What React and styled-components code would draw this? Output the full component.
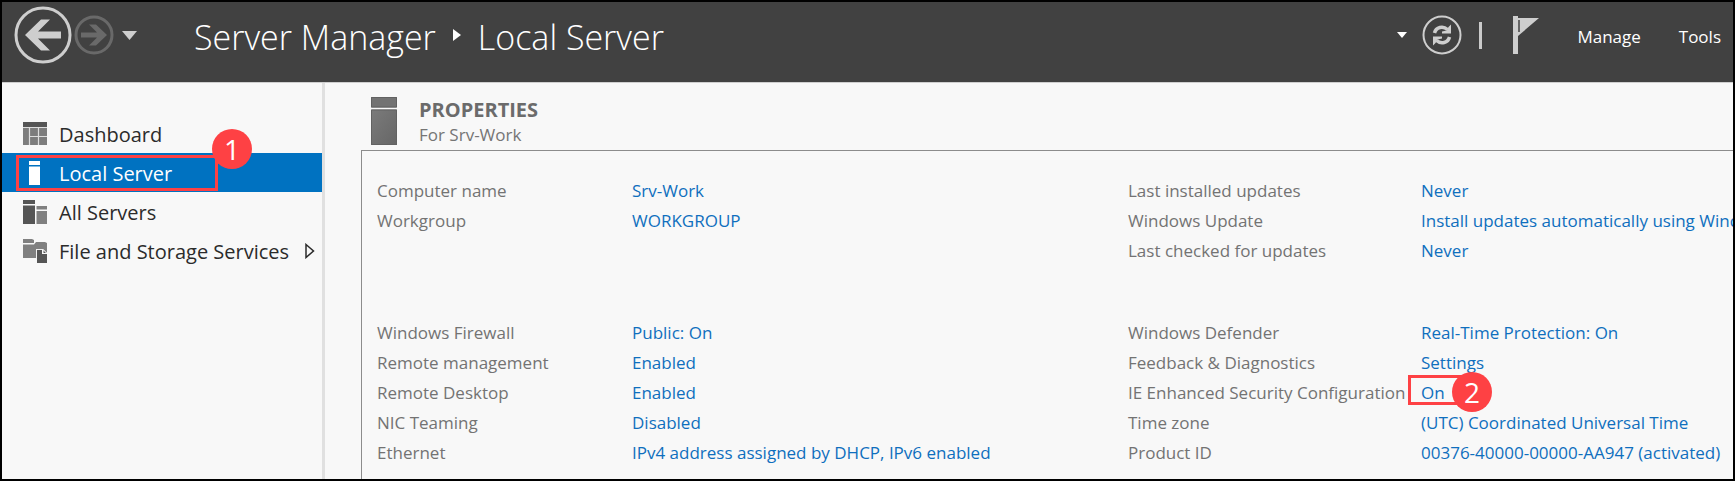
import React from "react";
import styled, { createGlobalStyle, css } from "styled-components";

const GlobalStyle = createGlobalStyle`
  *, *::before, *::after { box-sizing: border-box; }
  body {
    margin: 0;
    background: #f8f8f8;
    font-family: "Open Sans", "Noto Sans", sans-serif;
  }
  svg { display: block; flex: none; }
`;

const Window = styled.div`
  display: flex;
  flex-direction: column;
  min-height: 100vh;
  border: 2px solid #000;
  background: #f8f8f8;
  overflow: hidden;
`;

const Header = styled.header`
  display: flex;
  align-items: center;
  justify-content: space-between;
  height: 81px;
  padding: 0 12px 14px;
  background: #414141;
  border-bottom: 1px solid #cfcfcf;
  color: #fff;
`;

const HeaderGroup = styled.div`
  display: flex;
  align-items: center;
`;

const IconButton = styled.button`
  display: block;
  padding: 0;
  margin: 0 0 0 ${(p) => p.$gap || 0}px;
  border: 0;
  background: none;
  cursor: pointer;
`;

const Breadcrumb = styled.nav`
  display: flex;
  align-items: center;
  gap: 17px;
  margin-left: 57px;
  font-size: 34px;
  font-weight: 300;
  line-height: 48px;
  white-space: nowrap;
`;

const Crumb = styled.a`
  padding-top: 4px;
  color: #fff;
  text-decoration: none;
`;

const Divider = styled.span`
  width: 3px;
  height: 27px;
  margin: 0 31px 0 17px;
  background: #cacaca;
`;

const MenuButton = styled.button`
  margin: 0 0 0 38px;
  padding: 3px 0 0;
  border: 0;
  background: none;
  color: #fff;
  font: inherit;
  font-size: 17px;
  line-height: 24px;
  cursor: pointer;
`;

const Body = styled.div`
  display: flex;
  flex: 1;
`;

const Sidebar = styled.nav`
  flex: 0 0 323px;
  padding-top: 31px;
  border-right: 3px solid #e0e0e0;
`;

const NavList = styled.ul`
  margin: 0;
  padding: 0;
  list-style: none;
`;

const NavItem = styled.li`
  position: relative;
`;

const NavLink = styled.a`
  display: flex;
  align-items: center;
  gap: 12px;
  height: 39px;
  padding: 0 7px 0 21px;
  font-size: 20px;
  line-height: 28px;
  white-space: nowrap;
  text-decoration: none;
  color: #2b2b2b;
  ${(p) =>
    p.$active &&
    css`
      background: #0072c1;
      color: #fff;
    `}
`;

const NavLabel = styled.span`
  flex: 1;
  padding-top: 2px;
`;

const Main = styled.main`
  display: flex;
  flex-direction: column;
  flex: 1;
  min-width: 0;
  padding: 14px 0 0 36px;
`;

const TileHeader = styled.div`
  display: flex;
  gap: 22px;
  padding-left: 10px;
  height: 53px;
`;

const TileTitle = styled.h1`
  margin: 0;
  font-size: 20px;
  font-weight: 700;
  line-height: 25px;
  color: #6b6b6b;
`;

const TileSubtitle = styled.p`
  margin: 0;
  font-size: 17px;
  line-height: 25px;
  color: #757575;
`;

const Panel = styled.section`
  display: grid;
  grid-template-columns: minmax(0, 1fr) 605px;
  flex: 1;
  padding: 25px 0 10px 15px;
  border: solid #8c8c8c;
  border-width: 1px 0 0 1px;
`;

const Column = styled.div`
  display: grid;
  grid-template-rows: 90px auto;
  align-content: start;
  gap: 52px;
  min-width: 0;
`;

const Properties = styled.dl`
  display: grid;
  grid-template-columns: ${(p) => p.$label}px minmax(0, 1fr);
  grid-auto-rows: 30px;
  align-content: start;
  margin: 0;
  font-size: 17px;
  line-height: 30px;
  white-space: nowrap;
`;

const Term = styled.dt`
  color: #737373;
`;

const Value = styled.dd`
  position: relative;
  margin: 0;
`;

const ValueLink = styled.a`
  color: #0f6fbe;
  text-decoration: none;
`;

const Highlight = styled.span`
  position: absolute;
  border: 3px solid #fe4144;
  pointer-events: none;
`;

const NavHighlight = styled(Highlight)`
  inset: 2px 104px 1px 14px;
`;

const ValueHighlight = styled(Highlight)`
  left: -13px;
  top: -3px;
  width: 64px;
  height: 30px;
`;

const Badge = styled.span`
  position: absolute;
  right: -37px;
  top: ${(p) => p.$top}px;
  width: 40px;
  height: 40px;
  border-radius: 50%;
  background: #fe4144;
  color: #fff;
  font-size: 28px;
  line-height: 40px;
  text-align: center;
`;

const ValueBadge = styled(Badge)`
  right: -23px;
`;

const BackIcon = () => (
  <svg width="58" height="58" viewBox="0 0 58 58">
    <circle cx="29" cy="29" r="27" fill="none" stroke="#cecece" strokeWidth="3" />
    <path d="M11 29 27 13.500H36L24 25.500H47V32.500H24L36 44.500H27Z" fill="#cecece" />
  </svg>
);

const ForwardIcon = () => (
  <svg width="40" height="40" viewBox="0 0 40 40">
    <circle cx="20" cy="20" r="18" fill="none" stroke="#696969" strokeWidth="3" />
    <path d="M33 20 22 9.500H15L23 17.500H7V22.500H23L15 30.500H22Z" fill="#696969" />
  </svg>
);

const CaretDown = ({ width, height, fill }) => (
  <svg width={width} height={height} viewBox="0 0 16 10" preserveAspectRatio="none">
    <path d="M0 0H16L8 10Z" fill={fill} />
  </svg>
);

const CrumbArrow = () => (
  <svg width="8" height="12" viewBox="0 0 8 12">
    <path d="M0 0 8 6 0 12Z" fill="#fff" />
  </svg>
);

const RefreshIcon = () => (
  <svg width="40" height="40" viewBox="0 0 40 40">
    <circle cx="20" cy="20" r="18.500" fill="none" stroke="#cecece" strokeWidth="2" />
    <g fill="none" stroke="#cecece" strokeWidth="3.500">
      <path d="M12.500 18C14 12 21 10.500 25.500 14.500" />
      <path d="M27.500 22C26 28 19 29.500 14.500 25.500" />
    </g>
    <path d="M29 9.500V18.500H20V16.500L24.500 15.500L26.500 12Z" fill="#cecece" />
    <path d="M11 30.500V21.500H20V23.500L15.500 24.500L13.500 28Z" fill="#cecece" />
  </svg>
);

const FlagIcon = () => (
  <svg width="26" height="38" viewBox="0 0 26 38">
    <path d="M0 0H5V2H26L5 20V38H0Z" fill="#cecece" />
    <path d="M6 4V16" stroke="#414141" strokeWidth="1.500" />
  </svg>
);

const PropertiesIcon = () => (
  <svg width="26" height="48" viewBox="0 0 26 48">
    <defs>
      <linearGradient id="server" x1="0" y1="0" x2="1" y2="1">
        <stop offset="0" stopColor="#7b7b7b" />
        <stop offset="1" stopColor="#666" />
      </linearGradient>
    </defs>
    <path d="M0 0H26V10.500H0Z" fill="#737373" />
    <path d="M0 12.500H26V48H0Z" fill="url(#server)" />
    <path d="M0.500 0.500H25.500V10H0.500ZM0.500 13H25.500V47.500H0.500Z" fill="none" stroke="#626262" />
  </svg>
);

const DashboardIcon = () => (
  <svg width="24" height="24" viewBox="0 0 24 24">
    <path d="M0 0H24V5H0Z" fill="#555" />
    <path d="M0 5H24V23H0Z" fill="#7d7d7d" />
    <path d="M0 5.500H24M6.500 5V23M15.500 5V23M7 14.500H24" stroke="#dedede" strokeWidth="1.200" />
  </svg>
);

const LocalServerIcon = () => (
  <svg width="24" height="24" viewBox="0 0 24 24">
    <path d="M6 0H17V4H6ZM6 5.500H17V24H6Z" fill="#fff" />
  </svg>
);

const AllServersIcon = () => (
  <svg width="24" height="24" viewBox="0 0 24 24">
    <path d="M0 0H12V4H0ZM0 5.500H12V24H0Z" fill="#555" />
    <path d="M13.500 6H24V9.500H13.500ZM13.500 11H24V24H13.500Z" fill="#808080" />
  </svg>
);

const StorageIcon = () => (
  <svg width="24" height="24" viewBox="0 0 24 24">
    <path d="M0 0H9L11 1V4H0ZM0 5.500H11L13 3H22L24 4V14L20 10H13V19H0Z" fill="#808080" />
    <path d="M14 11H19V15H24V24H14Z" fill="#555" />
    <path d="M20.500 11 23.500 14H20.500Z" fill="#555" />
    <path d="M13.500 20V10.500H20L24 14.500" fill="none" stroke="#f0f0f0" strokeWidth="1" />
  </svg>
);

const ExpandIcon = () => (
  <svg width="10" height="16" viewBox="0 0 10 16">
    <path d="M1 1.500 8.500 8 1 14.500Z" fill="none" stroke="#2b2b2b" strokeWidth="1.500" />
  </svg>
);

const NAV = [
  { label: "Dashboard", Icon: DashboardIcon },
  { label: "Local Server", Icon: LocalServerIcon, active: true, badge: "1" },
  { label: "All Servers", Icon: AllServersIcon },
  { label: "File and Storage Services", Icon: StorageIcon, expandable: true },
];

const COLUMNS = [
  {
    label: 255,
    groups: [
      [
        ["Computer name", "Srv-Work"],
        ["Workgroup", "WORKGROUP"],
      ],
      [
        ["Windows Firewall", "Public: On"],
        ["Remote management", "Enabled"],
        ["Remote Desktop", "Enabled"],
        ["NIC Teaming", "Disabled"],
        ["Ethernet", "IPv4 address assigned by DHCP, IPv6 enabled"],
      ],
    ],
  },
  {
    label: 293,
    groups: [
      [
        ["Last installed updates", "Never"],
        ["Windows Update", "Install updates automatically using Windows Update"],
        ["Last checked for updates", "Never"],
      ],
      [
        ["Windows Defender", "Real-Time Protection: On"],
        ["Feedback & Diagnostics", "Settings"],
        ["IE Enhanced Security Configuration", "On", "2"],
        ["Time zone", "(UTC) Coordinated Universal Time"],
        ["Product ID", "00376-40000-00000-AA947 (activated)"],
      ],
    ],
  },
];

export default function App() {
  return (
    <>
      <GlobalStyle />
      <Window>
        <Header>
          <HeaderGroup>
            <IconButton aria-label="Back">
              <BackIcon />
            </IconButton>
            <IconButton aria-label="Forward" $gap={2}>
              <ForwardIcon />
            </IconButton>
            <IconButton aria-label="History" $gap={8}>
              <CaretDown width="15" height="9" fill="#cecece" />
            </IconButton>
            <Breadcrumb aria-label="Breadcrumb">
              <Crumb href="#server-manager">Server Manager</Crumb>
              <CrumbArrow />
              <Crumb href="#local-server">Local Server</Crumb>
            </Breadcrumb>
          </HeaderGroup>
          <HeaderGroup>
            <IconButton aria-label="More">
              <CaretDown width="10" height="6" fill="#fff" />
            </IconButton>
            <IconButton aria-label="Refresh" $gap={15}>
              <RefreshIcon />
            </IconButton>
            <Divider />
            <IconButton aria-label="Notifications">
              <FlagIcon />
            </IconButton>
            <MenuButton>Manage</MenuButton>
            <MenuButton>Tools</MenuButton>
          </HeaderGroup>
        </Header>
        <Body>
          <Sidebar aria-label="Servers">
            <NavList>
              {NAV.map(({ label, Icon, active, badge, expandable }) => (
                <NavItem key={label}>
                  <NavLink href="#" $active={active} aria-current={active ? "page" : undefined}>
                    <Icon />
                    <NavLabel>{label}</NavLabel>
                    {expandable && <ExpandIcon />}
                  </NavLink>
                  {badge && (
                    <NavHighlight>
                      <Badge $top={-29}>{badge}</Badge>
                    </NavHighlight>
                  )}
                </NavItem>
              ))}
            </NavList>
          </Sidebar>
          <Main>
            <TileHeader>
              <PropertiesIcon />
              <div>
                <TileTitle>PROPERTIES</TileTitle>
                <TileSubtitle>For Srv-Work</TileSubtitle>
              </div>
            </TileHeader>
            <Panel>
              {COLUMNS.map((column) => (
                <Column key={column.label}>
                  {column.groups.map((rows, i) => (
                    <Properties key={i} $label={column.label}>
                      {rows.map(([term, value, badge]) => (
                        <React.Fragment key={term}>
                          <Term>{term}</Term>
                          <Value>
                            <ValueLink href="#">{value}</ValueLink>
                            {badge && (
                              <ValueHighlight>
                                <ValueBadge $top={-6}>{badge}</ValueBadge>
                              </ValueHighlight>
                            )}
                          </Value>
                        </React.Fragment>
                      ))}
                    </Properties>
                  ))}
                </Column>
              ))}
            </Panel>
          </Main>
        </Body>
      </Window>
    </>
  );
}
